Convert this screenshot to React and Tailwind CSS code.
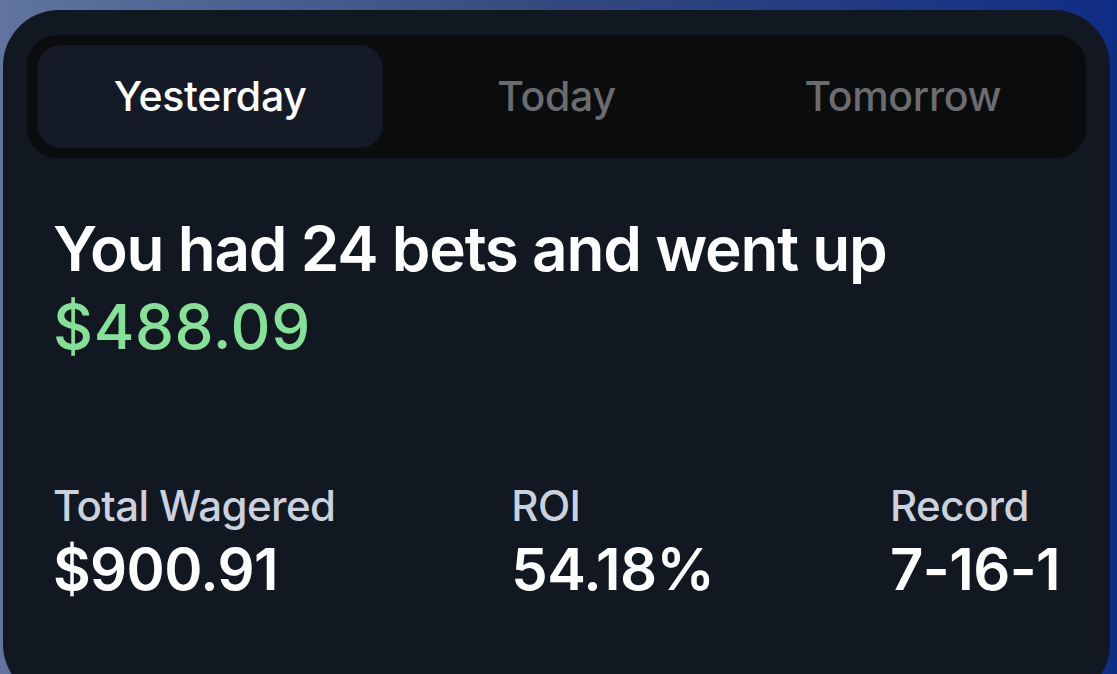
import React, { useState } from "react";

const TABS = ["Yesterday", "Today", "Tomorrow"];

const STATS = [
  { label: "Total Wagered", value: "$900.91" },
  { label: "ROI", value: "54.18%" },
  { label: "Record", value: "7-16-1" },
];

function Stat({ label, value }) {
  return (
    <div className="flex flex-col">
      <span className="text-[42px] leading-[52px] font-medium text-[#cbd2de] tracking-[-0.6px]">
        {label}
      </span>
      <span className="mt-[4px] text-[58px] leading-[66px] font-semibold text-white tracking-[-0.6px]">
        {value}
      </span>
    </div>
  );
}

export default function App() {
  const [active, setActive] = useState(0);

  return (
    <div
      className="h-[674px] w-full overflow-hidden bg-gradient-to-r from-[#60749f] via-[#34487f] to-[#102d85]"
      style={{ fontFamily: "Inter, 'Noto Sans', sans-serif" }}
    >
      <div className="mt-[10px] ml-[3px] w-[1107px] h-[690px] rounded-[56px] bg-[#121822] pt-[25px] px-[24px]">
        <div className="grid grid-cols-3 h-[123px] rounded-[30px] bg-[#0b0c0e] p-[10px]">
          {TABS.map((tab, i) => (
            <button
              key={tab}
              onClick={() => setActive(i)}
              className={`rounded-[24px] flex items-center justify-center text-[41px] font-medium tracking-[-0.3px] ${
                active === i ? "bg-[#141b26] text-white" : "text-[#6b6c70]"
              }`}
            >
              {tab}
            </button>
          ))}
        </div>

        <div className="px-[26px]">
          <h1 className="mt-[52px] text-[62px] leading-[78px] font-semibold text-white tracking-[-1.2px]">
            You had 24 bets and went up
            <br />
            <span className="font-medium text-[#84e197] tracking-[0.6px]">$488.09</span>
          </h1>

          <div className="mt-[114px] flex justify-between">
            {STATS.map((s) => (
              <Stat key={s.label} label={s.label} value={s.value} />
            ))}
          </div>
        </div>
      </div>
    </div>
  );
}
